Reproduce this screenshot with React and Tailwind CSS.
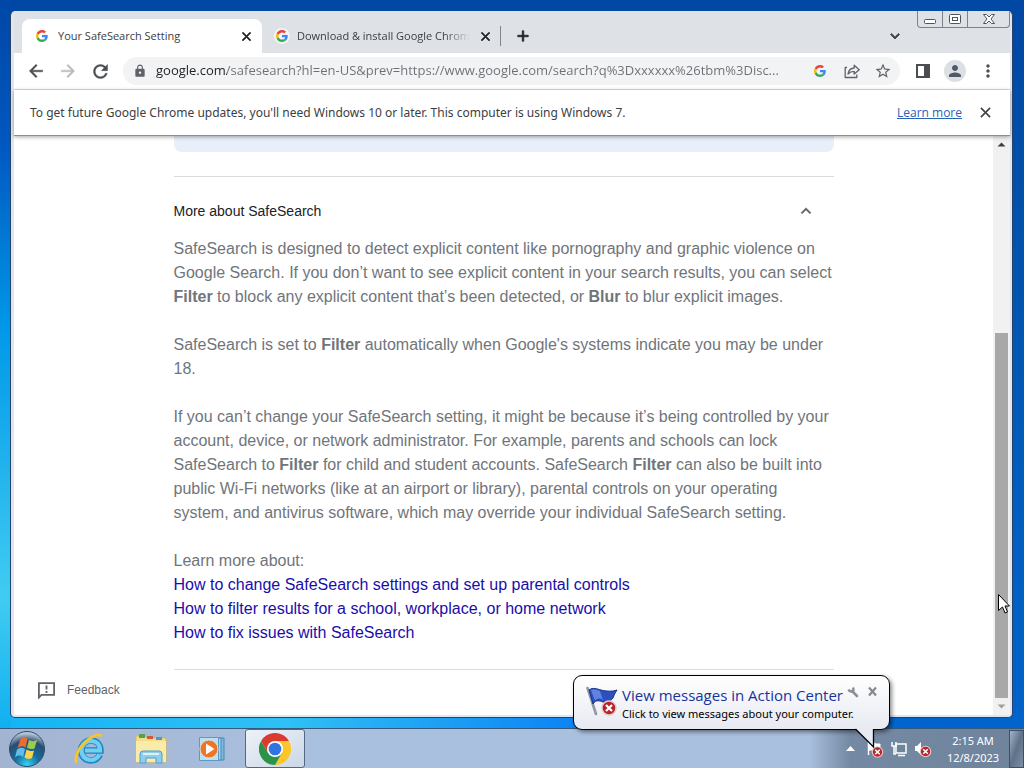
import {
  MdArrowBack,
  MdArrowForward,
  MdRefresh,
  MdLock,
  MdStarBorder,
  MdPerson,
  MdMoreVert,
  MdClose,
  MdAdd,
  MdExpandLess,
  MdExpandMore,
} from "react-icons/md";

// the first path of a material icon is its empty 24x24 box
const heavyIcon = "[&>path:first-child]:stroke-none";

const articleLinks = [
  "How to change SafeSearch settings and set up parental controls",
  "How to filter results for a school, workplace, or home network",
  "How to fix issues with SafeSearch",
];

function GoogleLogo({ className }) {
  return (
    <svg viewBox="0 0 48 48" className={className} aria-hidden="true">
      <path fill="#EA4335" d="M24 9.5c3.54 0 6.71 1.22 9.21 3.6l6.85-6.85C35.9 2.38 30.47 0 24 0 14.62 0 6.51 5.38 2.56 13.22l7.98 6.19C12.43 13.72 17.74 9.5 24 9.5z" />
      <path fill="#4285F4" d="M46.98 24.55c0-1.57-.15-3.09-.38-4.55H24v9.02h12.94c-.58 2.96-2.26 5.48-4.78 7.18l7.73 6c4.51-4.18 7.09-10.36 7.09-17.65z" />
      <path fill="#FBBC05" d="M10.53 28.59c-.48-1.45-.76-2.99-.76-4.59s.27-3.14.76-4.59l-7.98-6.19C.92 16.46 0 20.12 0 24c0 3.88.92 7.54 2.56 10.78l7.97-6.19z" />
      <path fill="#34A853" d="M24 48c6.48 0 11.93-2.13 15.89-5.81l-7.73-6c-2.15 1.45-4.92 2.3-8.16 2.3-6.26 0-11.57-4.22-13.47-9.91l-7.98 6.19C6.51 42.62 14.62 48 24 48z" />
    </svg>
  );
}

function WindowControls() {
  const line = { fill: "#fff", stroke: "#50555c", strokeWidth: 1 };
  return (
    <div className="flex h-[17px] rounded-b border border-t-0 border-[#7d828a] bg-[#dee1e6]">
      <button type="button" aria-label="Minimize" className="flex w-[25px] justify-center border-r border-[#7d828a]">
        <svg width="14" height="16" {...line}>
          <rect x="1.5" y="8.5" width="11" height="4" rx="1" />
        </svg>
      </button>
      <button type="button" aria-label="Maximize" className="flex w-[25px] justify-center border-r border-[#7d828a]">
        <svg width="14" height="16" {...line}>
          <rect x="1.5" y="3.5" width="11" height="9" rx="1" />
          <rect x="4.5" y="6.5" width="5" height="3" />
        </svg>
      </button>
      <button type="button" aria-label="Close" className="flex w-[41px] justify-center">
        <svg width="14" height="16" {...line}>
          <path d="M1.5 3.5h3L7 6l2.5-2.5h3L9 8l3.500 4.500h-3L7 10l-2.500 2.500h-3L5 8z" />
        </svg>
      </button>
    </div>
  );
}

function TabStrip() {
  return (
    <div className="flex h-[42px] items-start bg-[#dee1e6] pl-2">
      <div className="flex h-full items-end">
        <div className="flex h-[34px] w-[240px] items-center rounded-t-lg bg-white pl-[14px] pr-2">
          <GoogleLogo className="h-3 w-3 shrink-0" />
          <span className="ml-[10px] flex-1 whitespace-nowrap text-[11px] text-[#3c4043]">
            Your SafeSearch Setting
          </span>
          <button type="button" aria-label="Close tab" className="text-[#202124]">
            <MdClose size={15} strokeWidth={1} className={heavyIcon} />
          </button>
        </div>
        <div className="flex h-[34px] w-[238px] items-center pl-3 pr-[7px]">
          <span className="flex h-4 w-4 shrink-0 items-center justify-center rounded-full bg-white/60">
            <GoogleLogo className="h-3 w-3" />
          </span>
          <span className="ml-[7px] flex-1 overflow-hidden whitespace-nowrap text-[11px] text-[#3c4043] [mask-image:linear-gradient(to_right,#000_85%,transparent)]">
            Download &amp; install Google Chrome
          </span>
          <button type="button" aria-label="Close tab" className="ml-2 text-[#202124]">
            <MdClose size={15} strokeWidth={1} className={heavyIcon} />
          </button>
        </div>
        <div className="flex h-[34px] items-center">
          <span className="h-5 w-px bg-[#80868b]" />
          <button type="button" aria-label="New tab" className="ml-[13px] text-[#202124]">
            <MdAdd size={18} strokeWidth={1} className={heavyIcon} />
          </button>
        </div>
      </div>
      <div className="flex-1" />
      <button type="button" aria-label="Search tabs" className="mt-4 mr-[13px] text-[#3c4043]">
        <MdExpandMore size={18} strokeWidth={1} className={heavyIcon} />
      </button>
      <WindowControls />
    </div>
  );
}

function ShareIcon() {
  return (
    <svg width="18" height="18" viewBox="0 0 18 18" fill="none" stroke="#5f6368" strokeWidth="1.300" strokeLinejoin="round">
      <path d="M4 5.500H2.200v10h11.600v-3" />
      <path d="M5 12c.6-4 3-5.800 6.200-6V3.200l5 4.500-5 4.300V9.300C8.700 9.300 6.800 10 5 12z" />
    </svg>
  );
}

function Toolbar() {
  return (
    <div className="flex h-[37px] items-center border-b border-[#dadce0] bg-white pl-3 pr-3 text-[#5f6368]">
      <button type="button" aria-label="Back" className="text-[#4a4d51]">
        <MdArrowBack size={20} strokeWidth={0.5} className={heavyIcon} />
      </button>
      <button type="button" aria-label="Forward" className="ml-3 text-[#babcbe]">
        <MdArrowForward size={20} strokeWidth={0.5} className={heavyIcon} />
      </button>
      <button type="button" aria-label="Reload" className="ml-3 text-[#4a4d51]">
        <MdRefresh size={21} strokeWidth={0.5} className={heavyIcon} />
      </button>
      <div className="ml-3 flex h-7 flex-1 items-center rounded-full bg-[#f1f3f4] pl-[10px] pr-2">
        <MdLock size={14} className="shrink-0 text-[#5f6368]" />
        <input
          type="text"
          aria-label="Address"
          defaultValue="google.com/safesearch?hl=en-US&prev=https://www.google.com/search?q%3Dxxxxxx%26tbm%3Disc..."
          className="ml-[9px] min-w-0 flex-1 bg-[linear-gradient(to_right,#202124_71px,#6c7075_71px)] bg-clip-text text-[13px] text-transparent outline-none"
        />
        <button type="button" aria-label="Google" className="ml-3">
          <GoogleLogo className="h-3 w-3" />
        </button>
        <button type="button" aria-label="Share" className="ml-[17px]">
          <ShareIcon />
        </button>
        <button type="button" aria-label="Bookmark" className="ml-[13px]">
          <MdStarBorder size={18} />
        </button>
      </div>
      <button type="button" aria-label="Side panel" className="ml-4">
        <svg width="14" height="14">
          <path d="M0 0h14v14H0zM2 2v10h6V2z" fill="#4a4d51" fillRule="evenodd" />
        </svg>
      </button>
      <button type="button" aria-label="Profile" className="ml-[14px] flex h-[22px] w-[22px] items-center justify-center rounded-full bg-[#dcdfe4] text-[#4f5a68]">
        <MdPerson size={18} />
      </button>
      <button type="button" aria-label="Menu" className="ml-3 text-[#4a4d51]">
        <MdMoreVert size={20} />
      </button>
    </div>
  );
}

function InfoBar() {
  return (
    <div className="relative flex h-[46px] items-center border-b border-[#8c8e91] bg-white pl-4 pr-4 shadow-[0_1px_4px_rgba(0,0,0,0.35)]">
      <p className="flex-1 font-['Noto_Sans',sans-serif] text-[12px] text-[#3c4043]">
        To get future Google Chrome updates, you'll need Windows 10 or later. This computer is using Windows 7.
      </p>
      <a href="#learn" className="text-[12px] text-[#2a62b8] underline">
        Learn more
      </a>
      <button type="button" aria-label="Dismiss" className="ml-[15px] text-[#3c4043]">
        <MdClose size={17} strokeWidth={0.5} className={heavyIcon} />
      </button>
    </div>
  );
}

function Article() {
  return (
    <main className="mx-auto max-w-[660px] font-['Liberation_Sans',Arial,sans-serif] text-base leading-6 text-[#70757a]">
      <div className="h-4 rounded-b-lg bg-[#e8effb]" />
      <section className="mt-6 border-y border-[#dadce0] pb-6">
        <div className="flex h-[60px] items-center justify-between pt-2 pr-[18px]">
          <h2 className="text-[14px] text-[#202124]">More about SafeSearch</h2>
          <button type="button" aria-label="Collapse" className="text-[#5f6368]">
            <MdExpandLess size={20} strokeWidth={0.5} className={heavyIcon} />
          </button>
        </div>
        <div className="flex flex-col gap-6">
          <p>
            SafeSearch is designed to detect explicit content like pornography and graphic violence on Google
            Search. If you don’t want to see explicit content in your search results, you can select <b>Filter</b> to
            block any explicit content that’s been detected, or <b>Blur</b> to blur explicit images.
          </p>
          <p>
            SafeSearch is set to <b>Filter</b> automatically when Google's systems indicate you may be under 18.
          </p>
          <p>
            If you can’t change your SafeSearch setting, it might be because it’s being controlled by your account,
            device, or network administrator. For example, parents and schools can lock SafeSearch to <b>Filter</b> for
            child and student accounts. SafeSearch <b>Filter</b> can also be built into public Wi-Fi networks (like at
            an airport or library), parental controls on your operating system, and antivirus software, which may
            override your individual SafeSearch setting.
          </p>
          <div>
            <p>Learn more about:</p>
            <ul>
              {articleLinks.map((text) => (
                <li key={text}>
                  <a href="#help" className="text-[#1a0dab]">
                    {text}
                  </a>
                </li>
              ))}
            </ul>
          </div>
        </div>
      </section>
    </main>
  );
}

function Scrollbar() {
  return (
    <div className="flex w-[17px] shrink-0 flex-col items-center bg-[#f1f1f1]">
      <svg width="17" height="17">
        <path d="M4.500 10.500h8l-4-4z" fill="#404040" />
      </svg>
      <div className="h-[180px]" />
      <div className="w-[13px] flex-1 bg-[#a8a8a8]" />
      <svg width="17" height="17">
        <path d="M4.500 6.500h8l-4 4z" fill="#a0a0a0" />
      </svg>
    </div>
  );
}

function BrowserWindow() {
  return (
    <div className="flex min-h-0 flex-1 flex-col overflow-hidden rounded-[5px] border border-t-0 border-[#24446e] bg-[#e1e5ee] pr-[2px] pb-[2px] pl-[3px]">
      <TabStrip />
      <Toolbar />
      <InfoBar />
      <div className="flex min-h-0 flex-1 bg-white">
        <div className="flex min-w-0 flex-1 flex-col">
          <Article />
          <button
            type="button"
            className="mt-2 ml-6 flex items-center gap-3 self-start font-['Liberation_Sans',Arial,sans-serif] text-[12px] leading-6 text-[#5f6368]"
          >
            <svg width="17" height="17" viewBox="0 0 17 17" fill="none" stroke="#5f6368" strokeWidth="1.800">
              <path d="M.9 15.500V1.200h15.200v11.600H3.500z" />
              <path d="M8.500 3.500v4M8.500 9v2" />
            </svg>
            Feedback
          </button>
        </div>
        <Scrollbar />
      </div>
    </div>
  );
}

function ErrorBadge(props) {
  return (
    <g {...props}>
      <circle r="7" fill="#b4252b" stroke="#e8c8c8" strokeWidth="1.500" />
      <path d="M-3-3 3 3M3-3-3 3" stroke="#fff" strokeWidth="2.200" />
    </g>
  );
}

function StartOrb() {
  return (
    <svg width="38" height="38" viewBox="0 0 38 38">
      <defs>
        <radialGradient id="orb" cx="50%" cy="95%" r="90%">
          <stop offset="0" stopColor="#35d4f4" />
          <stop offset="0.4" stopColor="#146c9c" />
          <stop offset="0.75" stopColor="#2c4c70" />
          <stop offset="1" stopColor="#b8c8d8" />
        </radialGradient>
      </defs>
      <circle cx="19" cy="19" r="17.500" fill="url(#orb)" stroke="#28506f" />
      <path d="M12.500 9.500c3-2.500 4.500-2.500 7-.5l-2 8.500c-3-2-5-1.500-8 .5z" fill="#ee6b2c" />
      <path d="M21 10c3 1.500 5 1.500 8 0l-2.500 8.500c-3 1-5 .5-7.500-1z" fill="#9bcb4d" />
      <path d="M9 19.500c3-2 5-2.500 8-.5l-2 8c-3-2-5-2-8 .5z" fill="#63bdeb" />
      <path d="M18.500 19.500c3 1.500 4.500 2 7.500 1l-2 7.500c-3 1.500-5 1-7.500-.5z" fill="#fbd24b" />
    </svg>
  );
}

function ExplorerE() {
  return (
    <svg width="32" height="32" viewBox="0 0 32 32" fill="none">
      <path d="M26 21.500c-2 4-5 6-9 6-6 0-10-4.500-10-10s4.500-10 10-10 9.500 4 9.500 10H10" stroke="#2487c2" strokeWidth="6.500" />
      <path d="M25.500 21.500c-2 3.500-4.500 5.500-8.500 5.500-5.500 0-9.500-4-9.500-9.500s4-9.500 9.500-9.500 9 3.500 9 9.500H11" stroke="#6fd0f3" strokeWidth="4.200" />
      <path d="M3 30C-1 25 6 12 15 6c6-4 11-5 13-3" stroke="#f4c52c" strokeWidth="2.800" />
    </svg>
  );
}

function FolderIcon() {
  return (
    <svg width="34" height="32" viewBox="0 0 34 32">
      <path d="M2 3h9l2 2h19v24H2z" fill="#f3dd88" stroke="#d5b955" />
      <path d="M5 1h6v4H5z" fill="#52a447" />
      <path d="M13 3h6v3h-6z" fill="#d6583b" />
      <path d="M22 4h6v3h-6z" fill="#4b9ac7" />
      <path d="M2 8h30v21H2z" fill="#faeca8" />
      <path d="M6 30v-9q0-3 3-3h16q3 0 3 3v9h-6v-5H12v5z" fill="#8fcdec" stroke="#4b9fce" />
      <path d="M9 21h16" stroke="#d9f1fc" strokeWidth="2" />
    </svg>
  );
}

function MediaIcon() {
  return (
    <svg width="28" height="28" viewBox="0 0 28 28">
      <path d="M6 3h20v22H6z" fill="#7eb8dd" stroke="#478bb8" />
      <path d="M4 3h19v22H4z" fill="#a2d2ec" stroke="#478bb8" />
      <path d="M1.500 2.500h19v23h-19z" fill="#bfdff1" stroke="#5a9bc5" />
      <circle cx="11" cy="14" r="9" fill="#ee7524" stroke="#d9dee2" />
      <path d="M8 8.500v11l8.500-5.500z" fill="#fff" />
    </svg>
  );
}

function ChromeLogo() {
  return (
    <svg width="32" height="32" viewBox="0 0 48 48">
      <path d="M24 12h20.800A24 24 0 0 1 24 48l10.400-18z" fill="#fcc629" />
      <path d="M13.600 30 3.200 12A24 24 0 0 0 24 48l10.400-18z" fill="#2a9347" />
      <path d="M24 12h20.800A24 24 0 0 0 3.200 12l10.400 18z" fill="#db3a2f" />
      <circle cx="24" cy="24" r="12" fill="#fff" />
      <circle cx="24" cy="24" r="9.500" fill="#2f74e0" />
    </svg>
  );
}

function Tray() {
  return (
    <div className="flex items-center">
      <button type="button" aria-label="Show hidden icons" className="mr-[11px]">
        <svg width="9" height="5">
          <path d="M0 5h9L4.500 0z" fill="#fff" />
        </svg>
      </button>
      <button type="button" aria-label="Action Center" className="mr-[6px]">
        <svg width="18" height="18" fill="none" stroke="#fff">
          <path d="M2.500 2v13" strokeWidth="1.500" />
          <path d="M3 3h5l2 1h4v6H3z" fill="#fff" />
          <ErrorBadge transform="translate(11.500 12) scale(.75)" />
        </svg>
      </button>
      <button type="button" aria-label="Network" className="mr-[6px]">
        <svg width="18" height="18" fill="none" stroke="#fff" strokeWidth="1.500">
          <path d="M6 4h10v9H6z" fill="#6f839b" />
          <path d="M2 2v4h4V2M4 6v8h2M8 15.500h7" />
        </svg>
      </button>
      <button type="button" aria-label="Volume" className="mr-3">
        <svg width="18" height="18">
          <path d="M1 6h2l4-4v13l-4-4H1z" fill="#fff" />
          <ErrorBadge transform="translate(11.500 11.500) scale(.75)" />
        </svg>
      </button>
      <div className="w-[58px] text-center font-['Noto_Sans',sans-serif] text-[11px] leading-[17px] text-white">
        <p>2:15 AM</p>
        <p>12/8/2023</p>
      </div>
      <button
        type="button"
        aria-label="Show desktop"
        className="ml-[7px] h-[38px] w-[15px] border border-[#3c4f68] bg-linear-to-br from-[#a5b4c5] via-[#5d7189] to-[#7e90a6]"
      />
    </div>
  );
}

function Taskbar() {
  return (
    <footer className="flex h-10 shrink-0 items-center border-t border-[#33597f] bg-[linear-gradient(to_right,#a3b4d2,#a9c0de_30%,#a9c0de_79%,#7489a3_83%,#6f839b)]">
      <button type="button" aria-label="Start" className="flex w-[54px] justify-center">
        <StartOrb />
      </button>
      <button type="button" aria-label="Internet Explorer" className="ml-[5px] flex w-[61px] justify-center">
        <ExplorerE />
      </button>
      <button type="button" aria-label="File Explorer" className="flex w-[61px] justify-center">
        <FolderIcon />
      </button>
      <button type="button" aria-label="Media Player" className="flex w-[61px] justify-center">
        <MediaIcon />
      </button>
      <button
        type="button"
        aria-label="Google Chrome"
        className="ml-[3px] flex h-[39px] w-[60px] items-center justify-center rounded-[3px] border border-[#566780] bg-linear-to-br from-[#eef2f8] to-[#cbd7e7]"
      >
        <ChromeLogo />
      </button>
      <div className="flex-1" />
      <Tray />
    </footer>
  );
}

function FlagIcon() {
  return (
    <svg width="34" height="34" viewBox="0 0 34 34" className="shrink-0">
      <path d="M2.500 4 11 30" stroke="#8f979f" strokeWidth="2.600" strokeLinecap="round" />
      <path d="M4 6c4-3 8-1 12 0s11 2 16 0c-2 3-3 5-4 8-3 4-7 5-10 4s-7-3-10 2z" fill="#2c50bd" stroke="#1c2f8c" />
      <path d="M6 6c4-1 6 0 9 1l3 9c-3-2-6-2-8 1z" fill="#5f83e0" />
      <ErrorBadge transform="translate(24 24)" />
    </svg>
  );
}

function Balloon() {
  return (
    <aside className="absolute right-[134px] bottom-[38px] w-[317px] rounded-[9px] border border-black bg-linear-to-b from-white to-[#e8eaf2] shadow-[2px_2px_4px_rgba(0,0,0,0.45)]">
      <div className="flex h-[53px] pt-2 pl-[11px]">
        <FlagIcon />
        <div className="ml-[3px]">
          <div className="flex items-start">
            <h3 className="text-[15px] leading-[23px] whitespace-nowrap text-[#17349c]">
              View messages in Action Center
            </h3>
            <button type="button" aria-label="Options" className="ml-1 mt-[2px]">
              <svg width="12" height="12" viewBox="0 0 12 12">
                <path d="M5 5l5 5" stroke="#8c8f94" strokeWidth="2.600" strokeLinecap="round" />
                <path d="M1.500 3.500q1 2.500 3.500 2T6 1.500" fill="none" stroke="#8c8f94" strokeWidth="2.400" />
              </svg>
            </button>
            <button type="button" aria-label="Close" className="ml-2 mt-[2px]">
              <svg width="11" height="11">
                <path d="M2 1.500l7 8M9 1.500l-7 8" stroke="#86888c" strokeWidth="2.200" />
              </svg>
            </button>
          </div>
          <p className="font-['Noto_Sans',sans-serif] text-[11px] leading-[14px] whitespace-nowrap text-black">
            Click to view messages about your computer.
          </p>
        </div>
      </div>
      <svg width="20" height="20" className="absolute top-full right-[14px] overflow-visible">
        <path d="M1 1v-2h18V18z" fill="#e8eaf2" />
        <path d="M.5 0 18.500 18V0" fill="none" stroke="#000" strokeWidth="1.300" />
      </svg>
    </aside>
  );
}

export default function App() {
  return (
    <div className="relative flex h-screen min-h-[768px] flex-col overflow-hidden bg-[linear-gradient(#0047a3,#004fa8_20%,#005fc0_70%,#0064cc)] font-['Open_Sans','Segoe_UI',sans-serif]">
      <div className="flex min-h-0 flex-1 flex-col bg-[linear-gradient(#0047a6,#0058c0_20%,#0098e8_45%,#40ccf2_82%,#10b0f0),linear-gradient(to_right,#14b4f4,#30c0f4_28%,#0c84f4_56%,#0064cc_90%)] bg-[length:11px_100%,100%_15px] bg-[position:left_top,left_bottom] bg-no-repeat pt-[11px] pr-[11px] pb-[10px] pl-[10px]">
        <BrowserWindow />
      </div>
      <Taskbar />
      <Balloon />
      <svg width="14" height="22" className="absolute top-[593px] right-[13px]">
        <path d="M1.500 1.500v16l4-3.500 2.500 6 2.500-1-2.500-6h4.500z" fill="#fff" stroke="#000" />
      </svg>
    </div>
  );
}
